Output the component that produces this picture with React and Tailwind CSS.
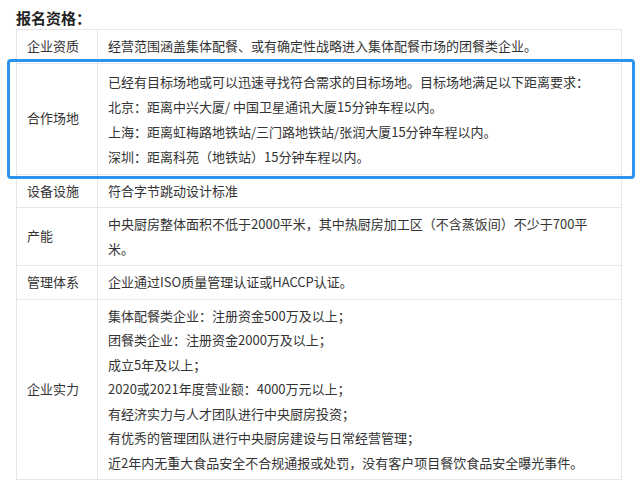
import React from 'react';

const rows = [
  { label: '企业资质', lines: ['经营范围涵盖集体配餐、或有确定性战略进入集体配餐市场的团餐类企业。'] },
  {
    label: '合作场地',
    lines: [
      '已经有目标场地或可以迅速寻找符合需求的目标场地。目标场地满足以下距离要求：',
      '北京：距离中兴大厦/ 中国卫星通讯大厦15分钟车程以内。',
      '上海：距离虹梅路地铁站/三门路地铁站/张润大厦15分钟车程以内。',
      '深圳：距离科苑（地铁站）15分钟车程以内。',
    ],
    tall: true,
  },
  { label: '设备设施', lines: ['符合字节跳动设计标准'] },
  {
    label: '产能',
    lines: ['中央厨房整体面积不低于2000平米，其中热厨房加工区（不含蒸饭间）不少于700平', '米。'],
  },
  { label: '管理体系', lines: ['企业通过ISO质量管理认证或HACCP认证。'] },
  {
    label: '企业实力',
    lines: [
      '集体配餐类企业：注册资金500万及以上；',
      '团餐类企业：注册资金2000万及以上；',
      '成立5年及以上；',
      '2020或2021年度营业额：4000万元以上；',
      '有经济实力与人才团队进行中央厨房投资；',
      '有优秀的管理团队进行中央厨房建设与日常经营管理；',
      '近2年内无重大食品安全不合规通报或处罚，没有客户项目餐饮食品安全曝光事件。',
    ],
  },
];

export default function App() {
  return (
    <div
      className="w-[640px] h-[489px] bg-white overflow-hidden text-[#333] pl-[16px] pt-[6px]"
      style={{ fontFamily: '"Noto Sans CJK SC", "Noto Sans", sans-serif' }}
    >
      <h2 className="text-[15px] font-bold leading-[23px] text-[#222]">报名资格：</h2>

      <div className="relative w-[606px]">
        <table className="w-full border-collapse text-[13px]">
          <tbody>
            {rows.map((row) => (
              <tr key={row.label}>
                <td className="w-[81px] border border-[#e6e6e6] px-[10px] align-middle whitespace-nowrap leading-[24.5px]">
                  {row.label}
                </td>
                <td
                  className={`border border-[#e6e6e6] px-[10px] ${row.tall ? 'py-[5px] leading-[25px]' : 'py-[4px] leading-[24.5px]'}`}
                >
                  {row.lines.map((line, i) => (
                    <div key={i} className="whitespace-nowrap">
                      {line}
                    </div>
                  ))}
                </td>
              </tr>
            ))}
          </tbody>
        </table>

        {/* highlight box over the 合作场地 row */}
        <div className="absolute left-[-9px] top-[30px] w-[628px] h-[120px] border-[3px] border-[#2e93ec] rounded-[4px] pointer-events-none" />
      </div>
    </div>
  );
}
